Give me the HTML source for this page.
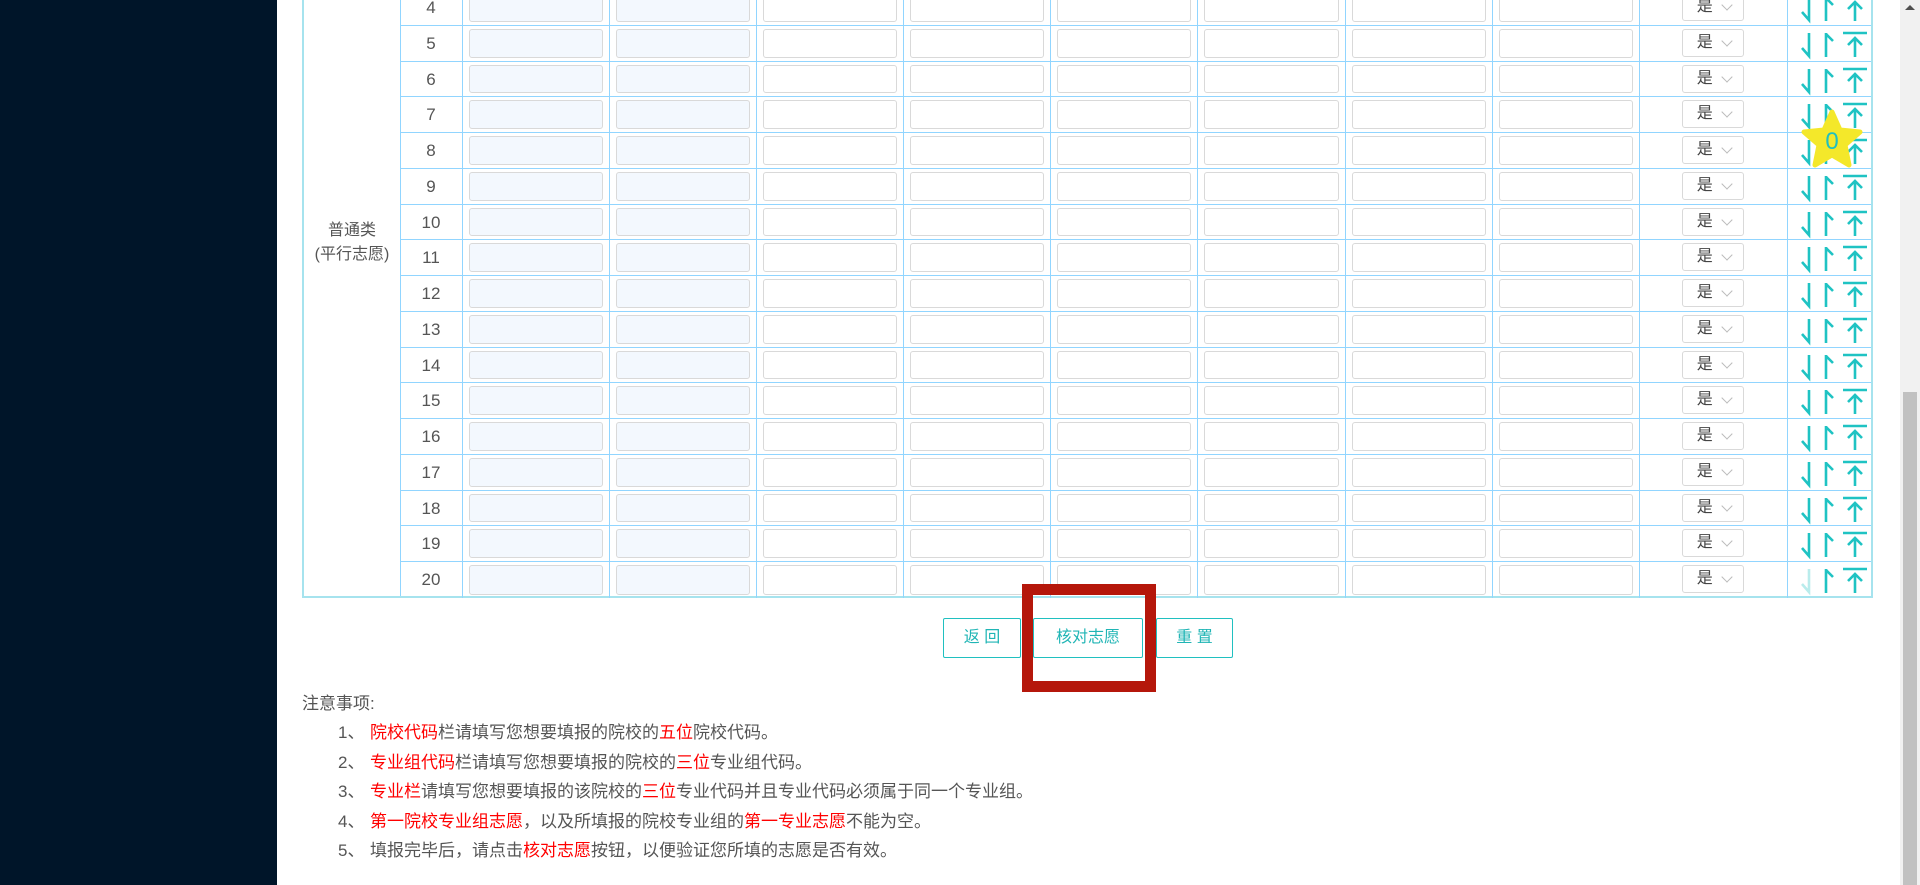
<!DOCTYPE html>
<html><head><meta charset="utf-8">
<style>
*{margin:0;padding:0;box-sizing:border-box}
body{width:1920px;height:885px;overflow:hidden;background:#fff;font-family:"Liberation Sans","Noto Sans CJK SC",sans-serif;position:relative}
#side{position:absolute;left:0;top:0;width:277px;height:885px;background:#001529}
#sb{position:absolute;left:1900px;top:0;width:20px;height:885px;background:#f1f1f1}
#sb .th{position:absolute;left:3px;top:392px;width:14px;height:493px;background:#c1c1c1}
#sb .up{position:absolute;left:5px;top:5px;width:0;height:0;border-left:5px solid transparent;border-right:5px solid transparent;border-bottom:5px solid #505050}
#tbl{position:absolute;left:302px;top:-10px;width:1571px;height:608px;border:2px solid #a6e3ee;border-top:none}
#lab{position:absolute;left:0;top:0;width:97px;height:606px;border-right:1px solid #91d5ff;display:flex;flex-direction:column;align-items:center;justify-content:center;color:#555;font-size:16px;line-height:24px;padding-bottom:100px}
.r{position:absolute;left:400px;height:35.75px;width:1471px;display:flex;border-bottom:1px solid #91d5ff}
.r>*{height:100%;border-right:1px solid #91d5ff;position:relative;flex:none}
.r b{width:63px;font-weight:normal;color:#555;font-size:17px;text-align:center;line-height:35px}
.r i{width:147.1px}
.r i::after{content:"";position:absolute;left:6px;right:6px;top:3px;bottom:3px;border:1px solid #d9d9d9;border-radius:3px;background:#fff}
.r i.a::after{background:#f3f8fe}
.r s{width:148px;text-decoration:none}
.r s span{position:absolute;left:42px;top:3px;width:62px;height:28px;border:1px solid #d9d9d9;border-radius:3px;font-size:16px;color:#444;padding-left:14px;line-height:26px}
.r s span::after{content:"";position:absolute;left:40px;top:7px;width:7px;height:7px;border-right:1px solid #bbb;border-bottom:1px solid #bbb;transform:rotate(45deg)}
.r em{width:85px;border-right:none}
.r em svg{position:absolute;left:0;top:0}
.btn{position:absolute;top:618px;height:40px;border:1px solid #20c0c0;color:#20b5b5;font-size:16px;text-align:center;line-height:38px;border-radius:2px;background:#fff}
#box{position:absolute;left:1022px;top:584px;width:134px;height:108px;border:11px solid #b5170b;border-top:none}
#box::before{content:"";position:absolute;left:-11px;right:-11px;top:0;height:11px;background:#b5170b}
.notes{position:absolute;left:302px;top:689px;font-size:17px;color:#555;line-height:29.4px}
.notes p{padding-left:36px}
.notes .n{display:inline-block;width:32px}
.red{color:#f00}
</style></head><body>
<div id="side"></div>
<div id="sb"><div class="up"></div><div class="th"></div></div>
<svg width="0" height="0" style="position:absolute"><defs>
<g id="ic" fill="none" stroke="#1fc3c3" stroke-width="2.6">
<path d="M21 7V30L14 22"/>
<path d="M38 7V31M38 8L45 15"/>
<path d="M55 7H79M67 12V31M60 19L67 12L74 19"/>
</g>
<g id="ic2" fill="none" stroke-width="2.6">
<path d="M21 7V30L14 22" stroke="#b9ecec"/>
<path d="M38 7V31M38 8L45 15" stroke="#1fc3c3"/>
<path d="M55 7H79M67 12V31M60 19L67 12L74 19" stroke="#1fc3c3"/>
</g></defs></svg>
<div id="tbl">
<div id="lab"><div>普通类</div><div>(平行志愿)</div></div>
</div>
<div style="position:absolute;left:0;top:0">
<div class="r" style="top:-10px"><b>4</b><i class="a"></i><i class="a"></i><i></i><i></i><i></i><i></i><i></i><i></i><s><span>是</span></s><em><svg width="85" height="36"><use href="#ic"/></svg></em></div>
<div class="r" style="top:25.75px"><b>5</b><i class="a"></i><i class="a"></i><i></i><i></i><i></i><i></i><i></i><i></i><s><span>是</span></s><em><svg width="85" height="36"><use href="#ic"/></svg></em></div>
<div class="r" style="top:61.5px"><b>6</b><i class="a"></i><i class="a"></i><i></i><i></i><i></i><i></i><i></i><i></i><s><span>是</span></s><em><svg width="85" height="36"><use href="#ic"/></svg></em></div>
<div class="r" style="top:97.25px"><b>7</b><i class="a"></i><i class="a"></i><i></i><i></i><i></i><i></i><i></i><i></i><s><span>是</span></s><em><svg width="85" height="36"><use href="#ic"/></svg></em></div>
<div class="r" style="top:133px"><b>8</b><i class="a"></i><i class="a"></i><i></i><i></i><i></i><i></i><i></i><i></i><s><span>是</span></s><em><svg width="85" height="36"><use href="#ic"/></svg></em></div>
<div class="r" style="top:168.75px"><b>9</b><i class="a"></i><i class="a"></i><i></i><i></i><i></i><i></i><i></i><i></i><s><span>是</span></s><em><svg width="85" height="36"><use href="#ic"/></svg></em></div>
<div class="r" style="top:204.5px"><b>10</b><i class="a"></i><i class="a"></i><i></i><i></i><i></i><i></i><i></i><i></i><s><span>是</span></s><em><svg width="85" height="36"><use href="#ic"/></svg></em></div>
<div class="r" style="top:240.25px"><b>11</b><i class="a"></i><i class="a"></i><i></i><i></i><i></i><i></i><i></i><i></i><s><span>是</span></s><em><svg width="85" height="36"><use href="#ic"/></svg></em></div>
<div class="r" style="top:276px"><b>12</b><i class="a"></i><i class="a"></i><i></i><i></i><i></i><i></i><i></i><i></i><s><span>是</span></s><em><svg width="85" height="36"><use href="#ic"/></svg></em></div>
<div class="r" style="top:311.75px"><b>13</b><i class="a"></i><i class="a"></i><i></i><i></i><i></i><i></i><i></i><i></i><s><span>是</span></s><em><svg width="85" height="36"><use href="#ic"/></svg></em></div>
<div class="r" style="top:347.5px"><b>14</b><i class="a"></i><i class="a"></i><i></i><i></i><i></i><i></i><i></i><i></i><s><span>是</span></s><em><svg width="85" height="36"><use href="#ic"/></svg></em></div>
<div class="r" style="top:383.25px"><b>15</b><i class="a"></i><i class="a"></i><i></i><i></i><i></i><i></i><i></i><i></i><s><span>是</span></s><em><svg width="85" height="36"><use href="#ic"/></svg></em></div>
<div class="r" style="top:419px"><b>16</b><i class="a"></i><i class="a"></i><i></i><i></i><i></i><i></i><i></i><i></i><s><span>是</span></s><em><svg width="85" height="36"><use href="#ic"/></svg></em></div>
<div class="r" style="top:454.75px"><b>17</b><i class="a"></i><i class="a"></i><i></i><i></i><i></i><i></i><i></i><i></i><s><span>是</span></s><em><svg width="85" height="36"><use href="#ic"/></svg></em></div>
<div class="r" style="top:490.5px"><b>18</b><i class="a"></i><i class="a"></i><i></i><i></i><i></i><i></i><i></i><i></i><s><span>是</span></s><em><svg width="85" height="36"><use href="#ic"/></svg></em></div>
<div class="r" style="top:526.25px"><b>19</b><i class="a"></i><i class="a"></i><i></i><i></i><i></i><i></i><i></i><i></i><s><span>是</span></s><em><svg width="85" height="36"><use href="#ic"/></svg></em></div>
<div class="r" style="top:562px;border-bottom:none"><b>20</b><i class="a"></i><i class="a"></i><i></i><i></i><i></i><i></i><i></i><i></i><s><span>是</span></s><em><svg width="85" height="36"><use href="#ic2"/></svg></em></div>
</div>
<svg style="position:absolute;left:1800px;top:108px" width="64" height="62" viewBox="0 0 64 62">
<path d="M32 4L40 22L60 24L45 37L49 57L32 47L15 57L19 37L4 24L24 22Z" fill="#f4e82a" stroke="#f4e82a" stroke-width="5" stroke-linejoin="round"/>
<text x="32" y="41" text-anchor="middle" font-size="24" fill="#20c0c0" font-family="Liberation Sans,sans-serif">0</text>
</svg>
<div class="btn" style="left:943px;width:78px">返 回</div>
<div class="btn" style="left:1033px;width:110px">核对志愿</div>
<div class="btn" style="left:1156px;width:77px">重 置</div>
<div id="box"></div>
<div class="notes">
<div>注意事项:</div>
<p><span class="n">1、</span><span class="red">院校代码</span>栏请填写您想要填报的院校的<span class="red">五位</span>院校代码。</p>
<p><span class="n">2、</span><span class="red">专业组代码</span>栏请填写您想要填报的院校的<span class="red">三位</span>专业组代码。</p>
<p><span class="n">3、</span><span class="red">专业栏</span>请填写您想要填报的该院校的<span class="red">三位</span>专业代码并且专业代码必须属于同一个专业组。</p>
<p><span class="n">4、</span><span class="red">第一院校专业组志愿</span>，以及所填报的院校专业组的<span class="red">第一专业志愿</span>不能为空。</p>
<p><span class="n">5、</span>填报完毕后，请点击<span class="red">核对志愿</span>按钮，以便验证您所填的志愿是否有效。</p>
</div>
</body></html>
